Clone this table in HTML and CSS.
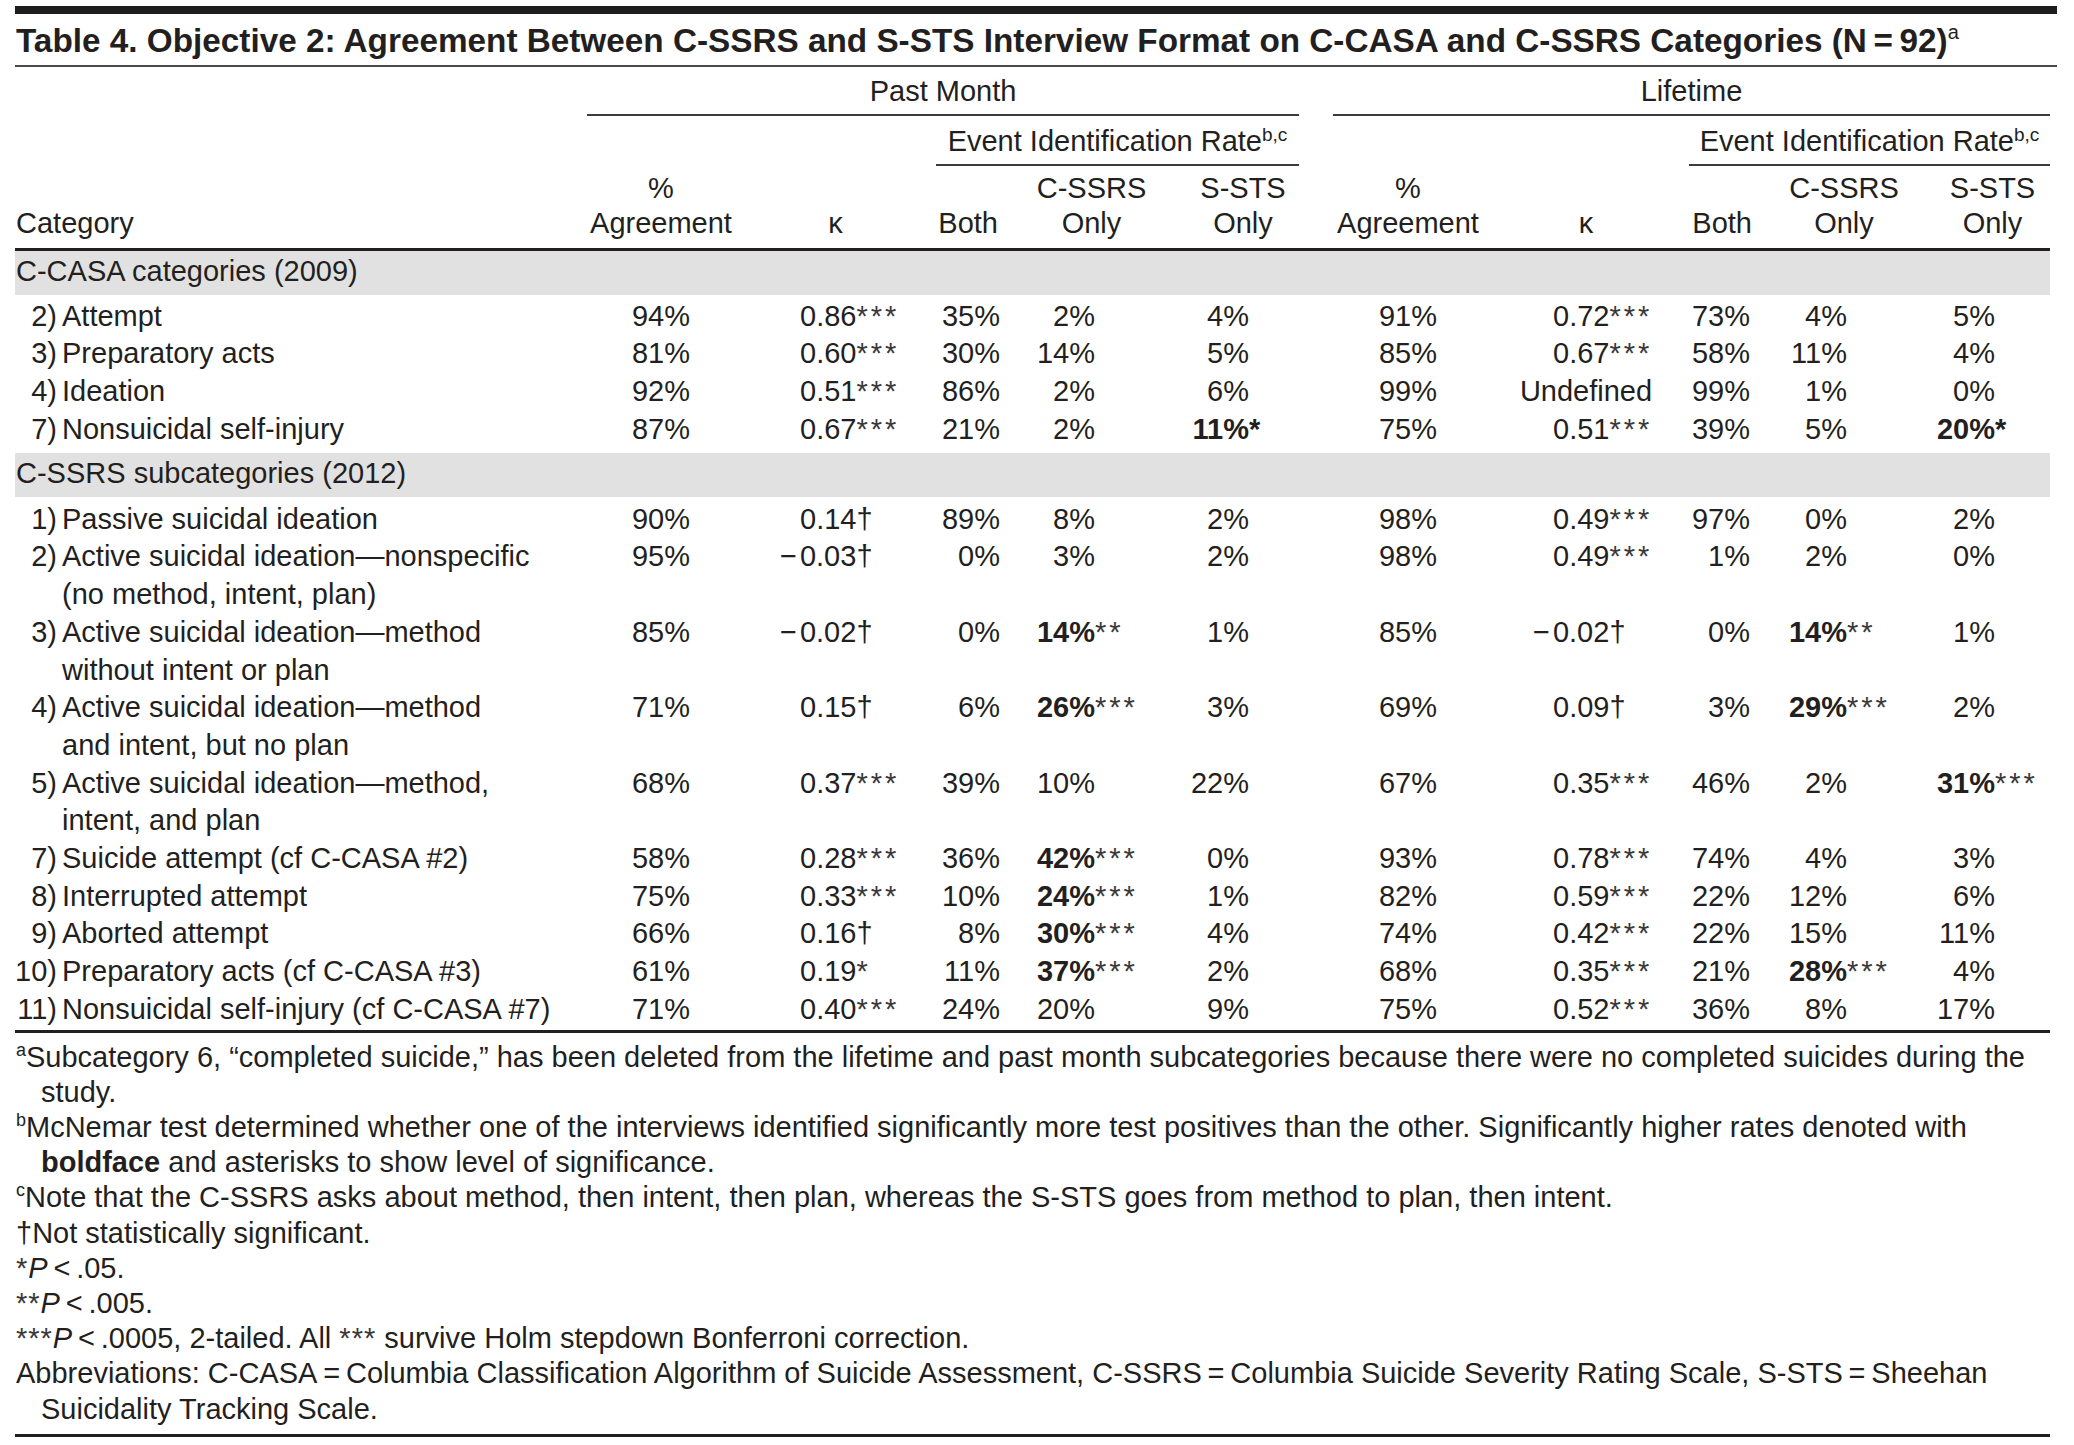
FILE: index.html
```html
<!DOCTYPE html>
<html lang="en">
<head>
<meta charset="utf-8">
<title>Table 4. Objective 2</title>
<link rel="stylesheet" href="styles.css">
</head>
<body>
<div class="page">
  <div class="topbar"></div>
  <h1 class="title">Table 4. Objective 2: Agreement Between C-SSRS and S-STS Interview Format on C-CASA and C-SSRS Categories (N&thinsp;=&thinsp;92)<sup>a</sup></h1>

  <div class="tbl">
    <div class="row ha">
      <div></div>
      <div class="span5">Past Month</div>
      <div></div>
      <div class="span5">Lifetime</div>
    </div>
    <div class="row hb">
      <div></div><div></div><div></div>
      <div class="span3">Event Identification Rate<sup>b,c</sup></div>
      <div></div><div></div><div></div>
      <div class="span3">Event Identification Rate<sup>b,c</sup></div>
    </div>
    <div class="row hc">
      <div>Category</div>
      <div>%<br>Agreement</div>
      <div>κ</div>
      <div>Both</div>
      <div>C-SSRS<br>Only</div>
      <div>S-STS<br>Only</div>
      <div></div>
      <div>%<br>Agreement</div>
      <div>κ</div>
      <div>Both</div>
      <div>C-SSRS<br>Only</div>
      <div>S-STS<br>Only</div>
    </div>

    <div class="band">C-CASA categories (2009)</div>
    <div class="rows first">
      <div class="row d">
        <div class="lab"><span class="num">2)</span><span class="txt">Attempt</span></div>
        <div>94%</div><div>0.86<span class="sig">***</span></div><div>35%</div><div>2%</div><div>4%</div><div></div>
        <div>91%</div><div>0.72<span class="sig">***</span></div><div>73%</div><div>4%</div><div>5%</div>
      </div>
      <div class="row d">
        <div class="lab"><span class="num">3)</span><span class="txt">Preparatory acts</span></div>
        <div>81%</div><div>0.60<span class="sig">***</span></div><div>30%</div><div>14%</div><div>5%</div><div></div>
        <div>85%</div><div>0.67<span class="sig">***</span></div><div>58%</div><div>11%</div><div>4%</div>
      </div>
      <div class="row d">
        <div class="lab"><span class="num">4)</span><span class="txt">Ideation</span></div>
        <div>92%</div><div>0.51<span class="sig">***</span></div><div>86%</div><div>2%</div><div>6%</div><div></div>
        <div>99%</div><div class="undef">Undefined</div><div>99%</div><div>1%</div><div>0%</div>
      </div>
      <div class="row d">
        <div class="lab"><span class="num">7)</span><span class="txt">Nonsuicidal self-injury</span></div>
        <div>87%</div><div>0.67<span class="sig">***</span></div><div>21%</div><div>2%</div><div><b>11%<span class="bsig">*</span></b></div><div></div>
        <div>75%</div><div>0.51<span class="sig">***</span></div><div>39%</div><div>5%</div><div><b>20%<span class="bsig">*</span></b></div>
      </div>
    </div>

    <div class="band">C-SSRS subcategories (2012)</div>
    <div class="rows second">
      <div class="row d">
        <div class="lab"><span class="num">1)</span><span class="txt">Passive suicidal ideation</span></div>
        <div>90%</div><div>0.14<span class="dag">†</span></div><div>89%</div><div>8%</div><div>2%</div><div></div>
        <div>98%</div><div>0.49<span class="sig">***</span></div><div>97%</div><div>0%</div><div>2%</div>
      </div>
      <div class="row d">
        <div class="lab"><span class="num">2)</span><span class="txt">Active suicidal ideation—nonspecific<br>(no method, intent, plan)</span></div>
        <div>95%</div><div><span class="neg">−</span>0.03<span class="dag">†</span></div><div>0%</div><div>3%</div><div>2%</div><div></div>
        <div>98%</div><div>0.49<span class="sig">***</span></div><div>1%</div><div>2%</div><div>0%</div>
      </div>
      <div class="row d">
        <div class="lab"><span class="num">3)</span><span class="txt">Active suicidal ideation—method<br>without intent or plan</span></div>
        <div>85%</div><div><span class="neg">−</span>0.02<span class="dag">†</span></div><div>0%</div><div><b>14%</b><span class="sig">**</span></div><div>1%</div><div></div>
        <div>85%</div><div><span class="neg">−</span>0.02<span class="dag">†</span></div><div>0%</div><div><b>14%</b><span class="sig">**</span></div><div>1%</div>
      </div>
      <div class="row d">
        <div class="lab"><span class="num">4)</span><span class="txt">Active suicidal ideation—method<br>and intent, but no plan</span></div>
        <div>71%</div><div>0.15<span class="dag">†</span></div><div>6%</div><div><b>26%</b><span class="sig">***</span></div><div>3%</div><div></div>
        <div>69%</div><div>0.09<span class="dag">†</span></div><div>3%</div><div><b>29%</b><span class="sig">***</span></div><div>2%</div>
      </div>
      <div class="row d">
        <div class="lab"><span class="num">5)</span><span class="txt">Active suicidal ideation—method,<br>intent, and plan</span></div>
        <div>68%</div><div>0.37<span class="sig">***</span></div><div>39%</div><div>10%</div><div>22%</div><div></div>
        <div>67%</div><div>0.35<span class="sig">***</span></div><div>46%</div><div>2%</div><div><b>31%</b><span class="sig">***</span></div>
      </div>
      <div class="row d">
        <div class="lab"><span class="num">7)</span><span class="txt">Suicide attempt (cf C-CASA #2)</span></div>
        <div>58%</div><div>0.28<span class="sig">***</span></div><div>36%</div><div><b>42%</b><span class="sig">***</span></div><div>0%</div><div></div>
        <div>93%</div><div>0.78<span class="sig">***</span></div><div>74%</div><div>4%</div><div>3%</div>
      </div>
      <div class="row d">
        <div class="lab"><span class="num">8)</span><span class="txt">Interrupted attempt</span></div>
        <div>75%</div><div>0.33<span class="sig">***</span></div><div>10%</div><div><b>24%</b><span class="sig">***</span></div><div>1%</div><div></div>
        <div>82%</div><div>0.59<span class="sig">***</span></div><div>22%</div><div>12%</div><div>6%</div>
      </div>
      <div class="row d">
        <div class="lab"><span class="num">9)</span><span class="txt">Aborted attempt</span></div>
        <div>66%</div><div>0.16<span class="dag">†</span></div><div>8%</div><div><b>30%</b><span class="sig">***</span></div><div>4%</div><div></div>
        <div>74%</div><div>0.42<span class="sig">***</span></div><div>22%</div><div>15%</div><div>11%</div>
      </div>
      <div class="row d">
        <div class="lab"><span class="num">10)</span><span class="txt">Preparatory acts (cf C-CASA #3)</span></div>
        <div>61%</div><div>0.19<span class="sig">*</span></div><div>11%</div><div><b>37%</b><span class="sig">***</span></div><div>2%</div><div></div>
        <div>68%</div><div>0.35<span class="sig">***</span></div><div>21%</div><div><b>28%</b><span class="sig">***</span></div><div>4%</div>
      </div>
      <div class="row d">
        <div class="lab"><span class="num">11)</span><span class="txt">Nonsuicidal self-injury (cf C-CASA #7)</span></div>
        <div>71%</div><div>0.40<span class="sig">***</span></div><div>24%</div><div>20%</div><div>9%</div><div></div>
        <div>75%</div><div>0.52<span class="sig">***</span></div><div>36%</div><div>8%</div><div>17%</div>
      </div>
    </div>
  </div>

  <div class="notes">
    <p><sup>a</sup>Subcategory 6, “completed suicide,” has been deleted from the lifetime and past month subcategories because there were no completed suicides during the study.</p>
    <p><sup>b</sup>McNemar test determined whether one of the interviews identified significantly more test positives than the other. Significantly higher rates denoted with <b>boldface</b> and asterisks to show level of significance.</p>
    <p><sup>c</sup>Note that the C-SSRS asks about method, then intent, then plan, whereas the S-STS goes from method to plan, then intent.</p>
    <p>†Not statistically significant.</p>
    <p><span class="nsig">*</span><i>P</i>&thinsp;&lt;&thinsp;.05.</p>
    <p><span class="nsig">**</span><i>P</i>&thinsp;&lt;&thinsp;.005.</p>
    <p><span class="nsig">***</span><i>P</i>&thinsp;&lt;&thinsp;.0005, 2-tailed. All <span class="nsig">***</span> survive Holm stepdown Bonferroni correction.</p>
    <p>Abbreviations: C-CASA&thinsp;=&thinsp;Columbia Classification Algorithm of Suicide Assessment, C-SSRS&thinsp;=&thinsp;Columbia Suicide Severity Rating Scale, S-STS&thinsp;=&thinsp;Sheehan Suicidality Tracking Scale.</p>
  </div>
</div>
</body>
</html>
```

FILE: styles.css
```css
html, body {
  margin: 0;
  padding: 0;
  background: #ffffff;
}

body {
  font-family: "Liberation Sans", Arial, sans-serif;
  font-size: 29px;
  color: #231f20;
}

.page {
  width: 2042px;
  padding: 6px 0 0 15px;
}

.topbar {
  height: 8px;
  background: #1f1c1d;
}

.title {
  margin: 7px 0 0;
  padding: 0 0 4px 1px;
  font-size: 33.3px;
  line-height: 40px;
  font-weight: bold;
  white-space: nowrap;
  border-bottom: 2px solid #4a4a4a;
}

.title sup {
  font-size: 20px;
  font-weight: normal;
  line-height: 0;
  vertical-align: 13px;
}

/* ---------- table grid ---------- */
.tbl {
  width: 2035px;
  border-bottom: 3px solid #231f20;
}

.row {
  display: grid;
  grid-template-columns: 572px 148px 201px 67px 177px 119px 34px 150px 206px 64px 182px 115px;
}

/* header rows */
.ha > div,
.hb > div,
.hc > div {
  line-height: 35.5px;
  text-align: center;
}

.ha > div {
  padding: 7px 0 4px;
}

.hb > div {
  padding: 8px 0 5px;
}

.span5 {
  grid-column: span 5;
  border-bottom: 2px solid #3c3c3c;
}

.span3 {
  grid-column: span 3;
  border-bottom: 2px solid #3c3c3c;
}

.hc > div {
  display: flex;
  flex-direction: column;
  justify-content: flex-end;
  padding: 4.75px 0 5.75px;
  border-bottom: 3px solid #231f20;
}

.hc > div:nth-child(1) {
  text-align: left;
  padding-left: 1px;
}

.hc > div:nth-child(4) {
  text-align: right;
  padding-right: 5px;
}

.hc > div:nth-child(10) {
  text-align: right;
  padding-right: 1px;
}

.hc > div:nth-child(6) {
  padding-left: 7px;
}

sup {
  font-size: 19px;
  line-height: 0;
  vertical-align: 10px;
}

/* section bands */
.band {
  background: #e1e1e1;
  padding: 2px 0 4.5px 1px;
  line-height: 37.7px;
}

.rows.first {
  padding: 3px 0 4.5px;
}

.rows.second {
  padding: 3.5px 0 1px;
}

/* data rows */
.d > div {
  line-height: 37.7px;
  white-space: nowrap;
}

.lab {
  display: flex;
}

.num {
  flex: none;
  width: 42px;
  text-align: right;
}

.txt {
  margin-left: 5px;
}

.d > div:nth-child(2),
.d > div:nth-child(8) {
  text-align: center;
}

.d > div:nth-child(3) {
  padding-left: 65px;
}

.d > div:nth-child(9) {
  padding-left: 70px;
}

.d > div:nth-child(4),
.d > div:nth-child(10) {
  text-align: right;
  padding-right: 3px;
}

.d > div:nth-child(5) {
  text-align: right;
  padding-right: 85px;
}

.d > div:nth-child(11) {
  text-align: right;
  padding-right: 88px;
}

.d > div:nth-child(6) {
  text-align: right;
  padding-right: 50px;
}

.d > div:nth-child(12) {
  text-align: right;
  padding-right: 55px;
}

.d > div.undef {
  padding-left: 0;
  text-align: center;
}

.sig,
.bsig {
  display: inline-block;
  width: 0;
  white-space: nowrap;
  letter-spacing: 3px;
}

.sig {
  font-weight: normal;
  color: #3a3a3a;
}

.neg {
  margin-left: -20px;
  margin-right: 3px;
}

/* footnotes */
.notes {
  box-sizing: border-box;
  width: 2035px;
  padding: 7px 0 7px 1px;
  border-bottom: 3px solid #231f20;
  line-height: 35.2px;
}

.notes p {
  margin: 0;
  padding-left: 25px;
  text-indent: -25px;
}

.notes sup {
  font-size: 18px;
  vertical-align: 11px;
}

.nsig {
  letter-spacing: 1px;
  color: #3a3a3a;
}
```
